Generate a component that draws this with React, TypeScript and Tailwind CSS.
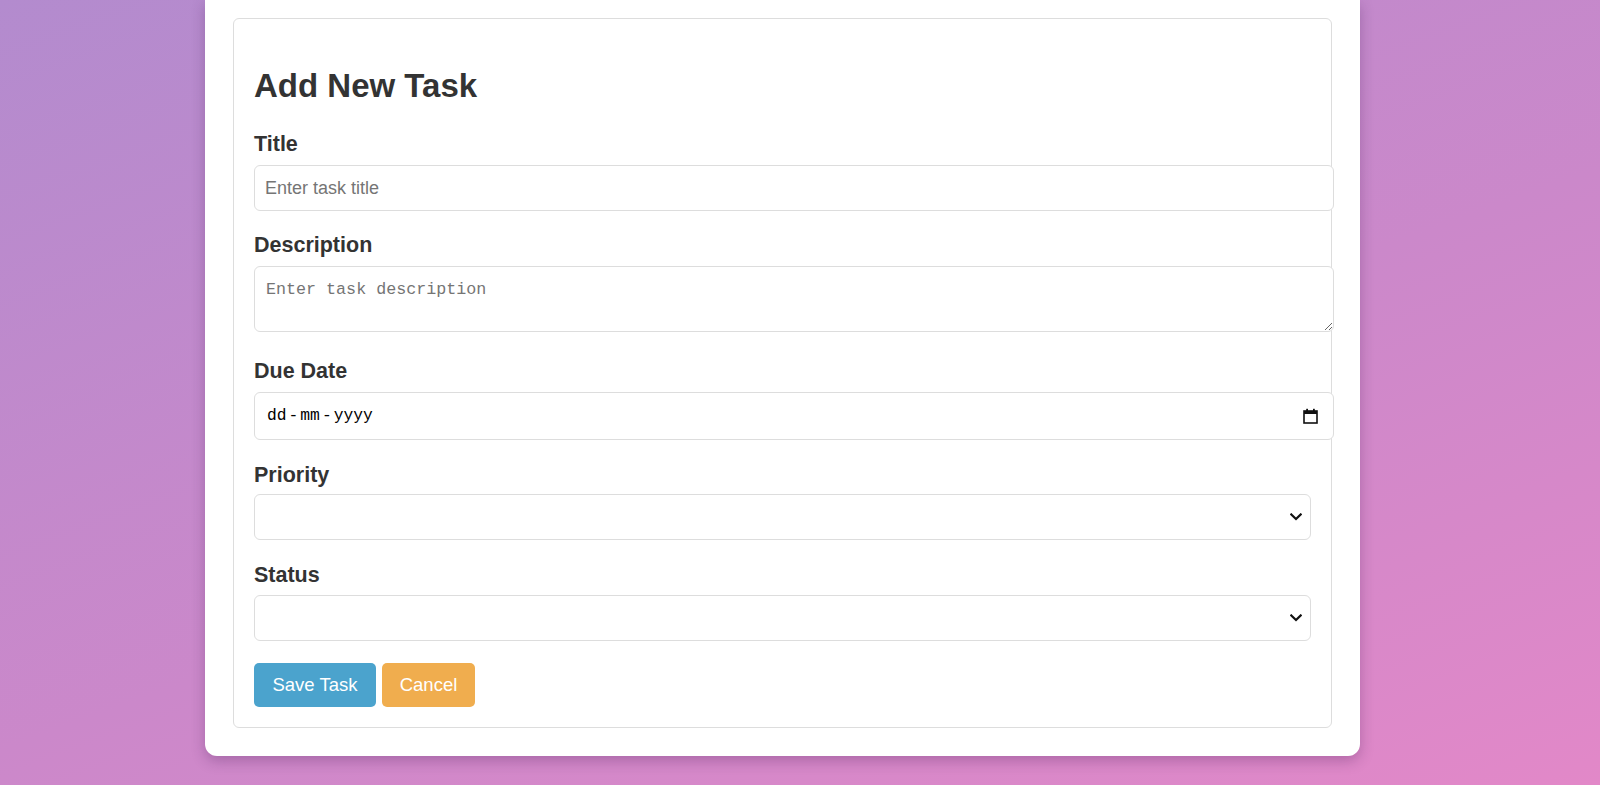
import React from "react";

function Label({ children, className = "" }: { children: React.ReactNode; className?: string }) {
  return (
    <div className={"h-[25px] text-[21.5px] font-bold leading-[25px] text-[#333333] " + className}>
      {children}
    </div>
  );
}

function Chevron() {
  return (
    <svg width="12" height="8" viewBox="0 0 12 8" className="shrink-0">
      <polyline points="1.3,1.5 6,6 10.7,1.5" fill="none" stroke="#111" strokeWidth="2.3" strokeLinecap="square" />
    </svg>
  );
}

function CalendarIcon() {
  return (
    <svg width="15" height="16" viewBox="0 0 15 16" className="shrink-0">
      <rect x="1" y="3" width="13" height="12" fill="none" stroke="#111" strokeWidth="1.6" />
      <rect x="1" y="3" width="13" height="3" fill="#111" />
      <rect x="3.2" y="0.8" width="1.8" height="3" fill="#111" />
      <rect x="10" y="0.8" width="1.8" height="3" fill="#111" />
    </svg>
  );
}

export default function App() {
  return (
    <div
      className="min-h-[785px] w-full overflow-hidden bg-[linear-gradient(160deg,#b38bce_0%,#cb88ca_55%,#e288c8_100%)]"
      style={{ fontFamily: '"Liberation Sans", Arial, sans-serif' }}
    >
      <div className="ml-[205px] w-[1155px] rounded-b-[12px] bg-white px-[28px] pb-[28px] pt-[18px] shadow-[0_5px_14px_rgba(60,20,80,0.28)]">
        <div className="rounded-[6px] border border-[#dddddd] px-[20px] pb-[20px] pt-[48px]">
          <h2 className="h-[37px] text-[33px] font-bold leading-[37px] text-[#333333]">Add New Task</h2>

          <Label className="mt-[28px]">Title</Label>
          <input
            type="text"
            placeholder="Enter task title"
            className="mt-[8px] box-content block h-[24px] w-[1058px] rounded-[6px] border border-[#dddddd] bg-white px-[10px] py-[10px] text-[18px] text-[#333] outline-none placeholder:text-[#757575]"
            style={{ fontFamily: '"Liberation Sans", Arial, sans-serif' }}
          />

          <Label className="mt-[22px]">Description</Label>
          <textarea
            placeholder="Enter task description"
            className="mt-[8px] box-content block h-[41px] w-[1058px] rounded-[6px] border border-[#dddddd] bg-white pb-[10px] pl-[11px] pr-[9px] pt-[13px] text-[16.7px] leading-[20px] text-[#333] outline-none placeholder:text-[#757575]"
            style={{ fontFamily: '"Liberation Mono", "DejaVu Sans Mono", monospace' }}
          />

          <Label className="mt-[27px]">Due Date</Label>
          <div className="mt-[8px] flex h-[48px] w-[1080px] items-center justify-between rounded-[6px] border border-[#dddddd] bg-white pl-[12px] pr-[15px]">
            <span
              className="flex text-[16.3px] text-black"
              style={{ fontFamily: '"Liberation Mono", "DejaVu Sans Mono", monospace' }}
            >
              <span>dd</span>
              <span className="mx-[2px]">-</span>
              <span>mm</span>
              <span className="mx-[2px]">-</span>
              <span>yyyy</span>
            </span>
            <CalendarIcon />
          </div>

          <Label className="mt-[23px]">Priority</Label>
          <div className="mt-[6px] flex h-[46px] w-full items-center justify-end rounded-[6px] border border-[#dddddd] bg-white pr-[8px]">
            <Chevron />
          </div>

          <Label className="mt-[23px]">Status</Label>
          <div className="mt-[7px] flex h-[46px] w-full items-center justify-end rounded-[6px] border border-[#dddddd] bg-white pr-[8px]">
            <Chevron />
          </div>

          <div className="mt-[22px] flex gap-[6px]">
            <button className="h-[44px] w-[122px] rounded-[5px] bg-[#4ba3cd] text-[18.5px] text-white">Save Task</button>
            <button className="h-[44px] w-[93px] rounded-[5px] bg-[#f0ad4e] text-[18.5px] text-white">Cancel</button>
          </div>
        </div>
      </div>
    </div>
  );
}
